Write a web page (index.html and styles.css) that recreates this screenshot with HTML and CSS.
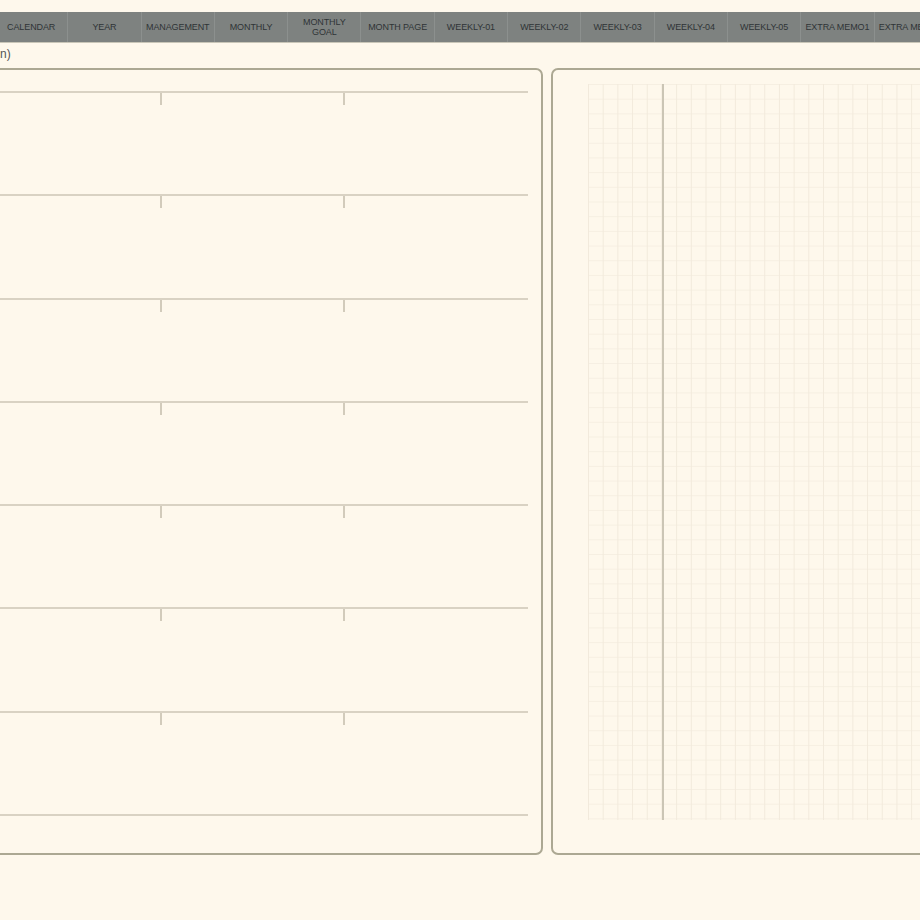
FILE: index.html
```html
<!DOCTYPE html>
<html lang="en">
<head>
	<meta charset="UTF-8">
	<title>Planner</title>

	<link rel="stylesheet" href="styles.css">
</head>
<body>

<div class="tabs">
	<div class="tab">CALENDAR</div>
	<div class="tab">YEAR</div>
	<div class="tab">MANAGEMENT</div>
	<div class="tab">MONTHLY</div>
	<div class="tab">MONTHLY<br>GOAL</div>
	<div class="tab">MONTH PAGE</div>
	<div class="tab">WEEKLY-01</div>
	<div class="tab">WEEKLY-02</div>
	<div class="tab">WEEKLY-03</div>
	<div class="tab">WEEKLY-04</div>
	<div class="tab">WEEKLY-05</div>
	<div class="tab">EXTRA MEMO1</div>
	<div class="tab">EXTRA MEMO2</div>
</div>

<div class="crumb">n)</div>

<div class="pages">
	<div class="page page-left">
		<div class="rows">
			<div class="row"><span></span><span></span><span></span></div>
			<div class="row"><span></span><span></span><span></span></div>
			<div class="row"><span></span><span></span><span></span></div>
			<div class="row"><span></span><span></span><span></span></div>
			<div class="row"><span></span><span></span><span></span></div>
			<div class="row"><span></span><span></span><span></span></div>
			<div class="row"><span></span><span></span><span></span></div>
		</div>
	</div>

	<div class="page page-right">
		<div class="grid">
			<div class="margin-line"></div>
		</div>
	</div>
</div>

</body>
</html>
```

FILE: styles.css
```css
html, body {
	width: 100%;
	height: 100%;
	margin: 0;
	background: #fef8ec;
	font-family: "Liberation Sans", Arial, sans-serif;
	overflow: hidden;
}

/* top navigation */
.tabs {
	display: flex;
	margin: 12px 0 0 -5px;
	height: 30px;
	background: #7e8280;
	border-bottom: 1px solid #c9c6b8;
}

.tab {
	flex: 0 0 73.3px;
	box-sizing: border-box;
	display: flex;
	align-items: center;
	justify-content: center;
	text-align: center;
	font-size: 9px;
	line-height: 10px;
	letter-spacing: -0.1px;
	color: #2f3436;
	border-right: 1px solid #8c908e;
	white-space: nowrap;
}

.crumb {
	height: 25px;
	line-height: 22px;
	font-size: 12px;
	color: #555;
}

/* the two pages */
.pages {
	display: flex;
	gap: 8px;
	margin-left: -38px;
}

.page {
	box-sizing: border-box;
	height: 787px;
	border: 2px solid #aca893;
	border-radius: 7px;
	flex: 0 0 auto;
}

.page-left {
	width: 581px;
	padding: 21px 13px 0 13px;
}

.page-right {
	width: 420px;
	padding: 14px 0 0 35px;
}

/* ruled rows with two tick marks */
.rows {
	border-bottom: 2px solid #d9d2c3;
}

.row {
	display: grid;
	grid-template-columns: 1fr 1fr 1fr;
	height: 103.3px;
	box-sizing: border-box;
	border-top: 2px solid #d9d2c3;
}

.row span {
	position: relative;
}

.row span + span::before {
	content: "";
	position: absolute;
	left: -1px;
	top: 0;
	width: 2px;
	height: 12px;
	background: #d2cbbb;
}

/* squared notes page */
.grid {
	position: relative;
	height: 736px;
	background-color: #fef8ec;
	background-image:
		linear-gradient(to right, #f2eadc 1px, transparent 1px),
		linear-gradient(to bottom, #f6efe2 1px, transparent 1px);
	background-size: 14.7px 14.7px;
}

.margin-line {
	position: absolute;
	left: 74px;
	top: 0;
	bottom: 0;
	width: 2px;
	background: #cbc5b5;
}
```
